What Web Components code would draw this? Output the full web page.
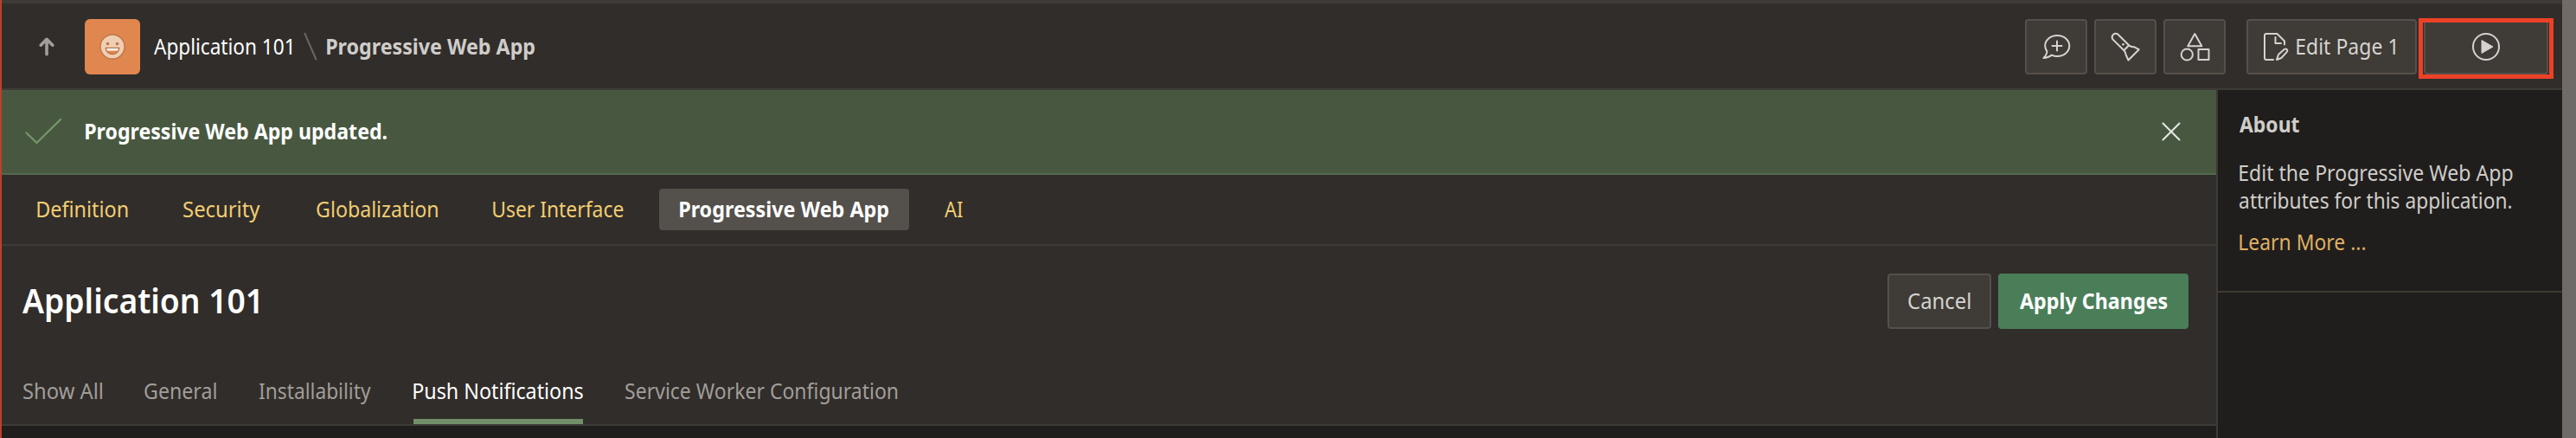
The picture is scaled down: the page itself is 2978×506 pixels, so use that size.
<!DOCTYPE html>
<html lang="en"><head><meta charset="utf-8"><title>Application 101</title>
<style>html,body{margin:0;background:#201e1c}body{font-family:"Noto Sans","Open Sans",sans-serif;font-size:25.5px;line-height:32px;overflow:hidden}</style></head>
<body><app-shell></app-shell>
<script>
const define=(name,html,after)=>customElements.define(name,class extends HTMLElement{
  constructor(){super();this.attachShadow({mode:'open'}).innerHTML=html;}
  connectedCallback(){if(after)after(this);}
});

// Single-line label whose glyphs are condensed to the width given in "w".
const ctx=document.createElement('canvas').getContext('2d');
const fit=el=>{
  const w=+el.getAttribute('w'),cs=getComputedStyle(el),span=el.shadowRoot.querySelector('span');
  span.style.transform='none';
  ctx.font=`${cs.fontWeight} ${cs.fontSize} ${cs.fontFamily}`;
  const m=ctx.measureText(el.textContent);
  const left=m.actualBoundingBoxLeft,bearings=m.width-left-m.actualBoundingBoxRight;
  const k=w/(span.getBoundingClientRect().width-bearings);
  el.style.width=w+'px';
  span.style.transform=`translateX(${left*k}px) scaleX(${k})`;
};
define('fit-text','<style>:host{display:block;flex:none;white-space:nowrap;padding-bottom:2px}span{display:inline-block;transform-origin:0 0;vertical-align:top}</style><span><slot></slot></span>');

define('ui-button',`<style>:host{display:flex;flex:none;align-items:center;justify-content:center;box-sizing:border-box;height:64px;border:2px solid #55504b;border-radius:4px;background:#3f3b36;color:#d5d3d0;position:relative}
:host([primary]){background:#4a7e58;border-color:#4a7e58;color:#fff;font-weight:700}
svg,::slotted(svg){display:block;flex:none}</style><slot></slot>`);

define('app-header',`<style>
:host{display:flex;box-sizing:border-box;height:104px;border-top:4px solid #3e3a36;border-bottom:2px solid #3e3a36;background:#312d2a;align-items:center;padding:2px 16px 0 41px}
svg{display:block;flex:none}.logo{width:64px;height:64px;border-radius:6px;background:#e0874f;display:grid;place-items:center;margin:0 16.3px 0 33px}
.app{color:#fff}.page{color:#cfcdca;font-weight:700}.sep{margin:0 11.5px 0 12px}
.tools{display:flex;gap:8px;margin-left:auto}.edit{margin-left:16px}
.ring{position:absolute;left:-8px;top:-3px;width:146px;height:60px;border:5px solid #ec4127}
</style>
<svg width="22" height="24" viewBox="0 0 22 24" fill="none" stroke="#a19f9c" stroke-width="3.6" stroke-linecap="round" stroke-linejoin="round"><path d="M11 20.7V3.5M4.2 10.2 11 3.3l6.8 6.9"/></svg>
<div class="logo"><svg width="32" height="32"><circle cx="16" cy="16" r="14" fill="#f0ceb4" stroke="#bd7545" stroke-width="1.4"/><circle cx="10.5" cy="12.6" r="1.8" fill="#bd7545"/><circle cx="21.5" cy="12.6" r="1.8" fill="#bd7545"/><path d="M8.3 17.5h15.4a7.7 7 0 0 1-15.4 0z" fill="#e0874f" stroke="#bd7545" stroke-width="1.4"/><path d="M9.2 18h13.6l-.7 2.5H9.9z" fill="#fff"/></svg></div>
<fit-text class="app" w="159.5">Application 101</fit-text>
<svg class="sep" width="17" height="34"><path d="M2.3 1.7 15.3 31.5" stroke="#6b6763" stroke-width="2" stroke-linecap="round"/></svg>
<fit-text class="page" w="240">Progressive Web App</fit-text>
<div class="tools">
<ui-button style="width:72px"><svg width="36" height="36" fill="none" stroke="#d5d3d0" stroke-width="2" stroke-linecap="round" stroke-linejoin="round"><path d="M7.4 23.2A11.8 11.8 0 0 1 5.2 17C5.2 10.3 11.5 5 19.3 5s14 5.3 14 12-6.2 12-14 12q-3.5 0-6.3-1.4c-2.3 1.7-5.5 3.3-9.5 3.3C6.5 28 7.5 26 7.4 23.2zM13.5 17h11M19 11.5v11"/></svg></ui-button>
<ui-button style="width:72px"><svg width="36" height="36" fill="none" stroke="#d5d3d0" stroke-width="2" stroke-linecap="round" stroke-linejoin="round"><path d="M22.1 16.2 9.5 3.7C5.5 1.2.9 5.1 3.4 9.4L16.4 22.2zM16.4 22.2q2.2 2.2 2.3 5.3l2.8 6L33.7 21.2l-5.8-3q-3.4.2-5.8-2"/><path d="M15.5 15.2h.1" stroke-width="2.6"/></svg></ui-button>
<ui-button style="width:72px"><svg width="36" height="36" fill="none" stroke="#d5d3d0" stroke-width="2" stroke-linejoin="round"><path d="M18.3 3 26.3 17.3H10.3z"/><circle cx="9.3" cy="27" r="6.6"/><path d="M22.5 21h12v12h-12z"/></svg></ui-button>
<ui-button class="edit" style="width:197px"><svg width="30" height="34" fill="none" stroke="#d5d3d0" stroke-width="2" stroke-linecap="round" stroke-linejoin="round" style="margin:0 8.7px 0 -6px"><path d="M12 32H4q-2 0-2-2V4Q2 2 4 2h12.5L25 10.5v4M14.5 6v7H21"/><path d="m16 32 2-6 7-6.2q2.2-1 3 .7.8 1.5-.6 2.8L21.3 30z"/></svg><fit-text w="114.5">Edit Page 1</fit-text></ui-button>
<ui-button style="width:144px"><svg width="34" height="34"><circle cx="17" cy="17" r="15" fill="none" stroke="#d5d3d0" stroke-width="2"/><path d="M12 9.5v15L25 17z" fill="#d5d3d0" stroke="#d5d3d0" stroke-linejoin="round"/></svg><div class="ring"></div></ui-button>
</div>`);

define('success-alert',`<style>:host{display:flex;height:96px;align-items:center;background:#485840;border-bottom:2px solid #546a4e;padding:0 40px 0 24px;color:#fff;font-weight:700}svg{display:block}.close{margin-left:auto}</style>
<svg width="46" height="34" style="margin-right:26.7px"><path d="m4.5 18.5 12 11.5L44 3" fill="none" stroke="#759669" stroke-width="2.3" stroke-linecap="round"/></svg><fit-text w="348">Progressive Web App updated.</fit-text>
<svg class="close" width="24" height="24"><path d="m2.5 2.5 19 19m0-19-19 19" stroke="#e5e8e2" stroke-width="2" stroke-linecap="round"/></svg>`);

define('section-nav',`<style>:host{display:flex;height:80px;align-items:center;gap:16.8px;padding-left:17px;border-bottom:2px solid #3e3a36;color:#f2cd72}a{display:flex;align-items:center;height:48px;padding:0 24px;border-radius:4px}.on{background:#54504b;color:#fff;font-weight:700}</style>
<a><fit-text w="104.5">Definition</fit-text></a><a><fit-text w="88.5">Security</fit-text></a><a><fit-text w="140">Globalization</fit-text></a><a><fit-text w="151">User Interface</fit-text></a><a class="on"><fit-text w="241">Progressive Web App</fit-text></a><a><fit-text w="21">AI</fit-text></a>`);

define('page-title',`<style>:host{display:flex;height:128px;align-items:center;padding:0 32px 0 24px}h1{margin:0;font-size:40.5px;font-weight:600;line-height:50px;color:#fff}.acts{margin-left:auto;display:flex;gap:8px}</style>
<h1><fit-text w="272.5">Application 101</fit-text></h1><div class="acts"><ui-button style="width:120px"><fit-text w="72">Cancel</fit-text></ui-button><ui-button primary style="width:220px"><fit-text w="170.5">Apply Changes</fit-text></ui-button></div>`);

define('page-tabs',`<style>:host{display:flex;gap:49.4px;height:78px;padding:0 24.6px;border-bottom:2px solid #3e3a36;color:#a19e9a}a{display:flex;align-items:center;box-sizing:border-box;height:78px;border-top:2px solid transparent}.on{color:#fff;border-top:8px solid transparent;border-bottom:6px solid #728f69}</style>
<a><fit-text w="91.5">Show All</fit-text></a><a><fit-text w="83">General</fit-text></a><a><fit-text w="128.5">Installability</fit-text></a><a class="on"><fit-text w="196.5">Push Notifications</fit-text></a><a style="margin-left:-1px"><fit-text w="314.5">Service Worker Configuration</fit-text></a>`);

define('about-panel',`<style>:host{display:block;width:398px;box-sizing:border-box;border-left:2px solid #3e3a36;background:#201e1c;color:#cfcdca}section{height:232px;border-bottom:2px solid #3e3a36;padding:0 24.7px}fit-text{height:32px;padding:0}h2{margin:0;padding:23px 0 24px;font-size:25.5px;font-weight:700}p{margin:0 0 16px}a{color:#dfb066}</style>
<section><h2><fit-text w="69.5">About</fit-text></h2><p><fit-text w="316">Edit the Progressive Web App</fit-text><fit-text w="314">attributes for this application.</fit-text></p><a><fit-text w="145">Learn More ...</fit-text></a></section>`);

define('app-shell',`<style>:host{display:flex;box-sizing:border-box;width:2978px;height:506px;overflow:hidden;border-left:2px solid #bb402b;border-right:16px solid #706b67;background:#201e1c}
.all{flex:1;display:flex;flex-direction:column}.body{display:flex;flex:1}about-panel{flex:none}.main{flex:1}.panel{background:#312d2a}</style>
<div class="all"><app-header></app-header><div class="body"><div class="main"><success-alert></success-alert><div class="panel"><section-nav></section-nav><page-title></page-title><page-tabs></page-tabs></div></div><about-panel style="width:400px"></about-panel></div></div>`);

// Labels are fitted once the whole tree is in place and its fonts are inherited.
const walk=root=>root.querySelectorAll('*').forEach(el=>{
  if(el.localName==='fit-text')fit(el);else if(el.shadowRoot)walk(el.shadowRoot);
});
walk(document);
</script></body></html>
